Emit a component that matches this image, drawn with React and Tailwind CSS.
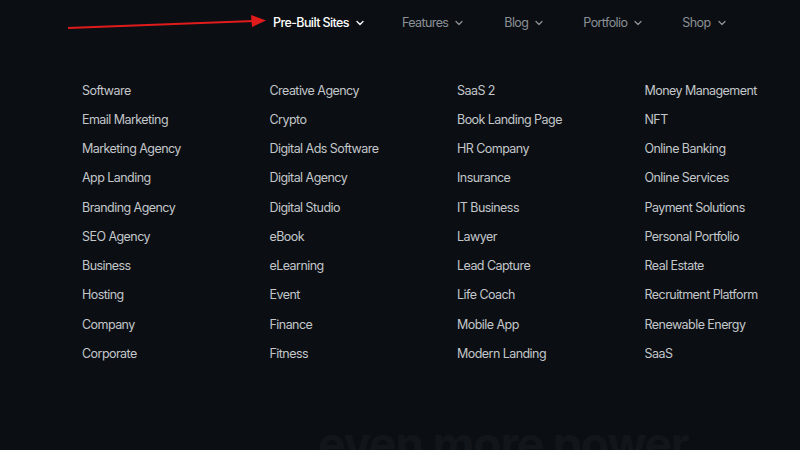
import React from "react";

const navItems = ["Pre-Built Sites", "Features", "Blog", "Portfolio", "Shop"];

const columns = [
  ["Software", "Email Marketing", "Marketing Agency", "App Landing", "Branding Agency", "SEO Agency", "Business", "Hosting", "Company", "Corporate"],
  ["Creative Agency", "Crypto", "Digital Ads Software", "Digital Agency", "Digital Studio", "eBook", "eLearning", "Event", "Finance", "Fitness"],
  ["SaaS 2", "Book Landing Page", "HR Company", "Insurance", "IT Business", "Lawyer", "Lead Capture", "Life Coach", "Mobile App", "Modern Landing"],
  ["Money Management", "NFT", "Online Banking", "Online Services", "Payment Solutions", "Personal Portfolio", "Real Estate", "Recruitment Platform", "Renewable Energy", "SaaS"],
];

const Chevron = ({ className }) => (
  <svg width="10" height="10" viewBox="0 0 10 10" className={className}>
    <path d="M2 3.5 L5 6.5 L8 3.5" fill="none" stroke="currentColor" strokeWidth="1.3" strokeLinecap="round" strokeLinejoin="round" />
  </svg>
);

const App = () => {
  return (
    <div
      className="relative w-[800px] h-[450px] overflow-hidden bg-[#0b0f13]"
      style={{ fontFamily: "Inter, 'Noto Sans', sans-serif" }}
    >
      {/* red pointer */}
      <svg className="absolute left-0 top-0" width="280" height="40">
        <line x1="68" y1="28" x2="254" y2="21" stroke="#e01b1b" strokeWidth="2.2" />
        <polygon points="266,20.5 251,15 252,27" fill="#e01b1b" />
      </svg>

      <nav className="flex items-center h-[46px] pl-[273px] text-[12.5px] tracking-[-0.6px]">
        {navItems.map((item, i) => (
          <div
            key={item}
            className={
              i === 0
                ? "flex items-center gap-[6px] text-white font-medium mr-[37px]"
                : i === 1
                ? "flex items-center gap-[6px] text-[#8b9096] mr-[40px]"
                : i === 2
                ? "flex items-center gap-[6px] text-[#8b9096] mr-[39px]"
                : "flex items-center gap-[6px] text-[#8b9096] mr-[39px]"
            }
          >
            <span>{item}</span>
            <Chevron className={i === 0 ? "text-white" : "text-[#8b9096]"} />
          </div>
        ))}
      </nav>

      <div className="grid grid-cols-[repeat(4,187.5px)] pl-[82px] pt-[29.5px]">
        {columns.map((col, ci) => (
          <ul key={ci} className="flex flex-col">
            {col.map((name) => (
              <li key={name} className="h-[29.25px] leading-[29.25px] text-[12.5px] tracking-[-0.55px] text-[#c3c6ca]">
                {name}
              </li>
            ))}
          </ul>
        ))}
      </div>

      <div className="pt-[52px] pl-[318px] text-[46px] font-bold leading-none text-[#12161a] tracking-tight whitespace-nowrap">
        even more power
      </div>
    </div>
  );
};

export default App;
